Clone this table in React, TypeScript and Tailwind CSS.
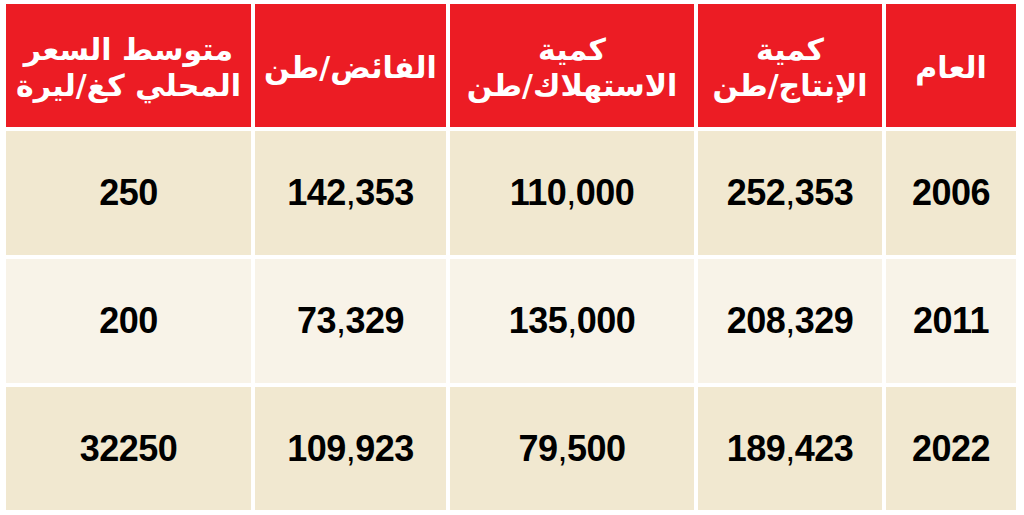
export default function App() {
  const headers = [
    ["العام"],
    ["كمية", "الإنتاج/طن"],
    ["كمية", "الاستهلاك/طن"],
    ["الفائض/طن"],
    ["متوسط السعر", "المحلي كغ/ليرة"],
  ]

  const rows = [
    ["2006", "252,353", "110,000", "142,353", "250"],
    ["2011", "208,329", "135,000", "73,329", "200"],
    ["2022", "189,423", "79,500", "109,923", "32250"],
  ]

  const rowBg = ["bg-[#f1e8d0]", "bg-[#f8f3e8]", "bg-[#f1e8d0]"]

  return (
    <div
      dir="rtl"
      className="w-[1024px] h-[515px] bg-white pt-[4px] pb-[5px] pl-[6px] pr-[8px] grid grid-cols-[130px_184px_244px_191px_245px] grid-rows-[123px_124px_124px_123px] gap-[4px]"
    >
      {headers.map((lines, i) => (
        <div
          key={i}
          className="bg-[#ec1c24] flex flex-col items-center justify-center pt-[4px] text-white font-bold text-[30px] leading-[36px] font-['DejaVu_Sans',sans-serif]"
        >
          {lines.map((l) => (
            <span key={l}>{l}</span>
          ))}
        </div>
      ))}

      {rows.map((row, r) =>
        row.map((cell, c) => {
          const parts = cell.split(",")
          return (
            <div
              key={`${r}-${c}`}
              className={`${rowBg[r]} flex items-center justify-center text-black font-black text-[36px] tracking-[-0.5px] font-['Liberation_Sans',Arial,sans-serif]`}
            >
              <span dir="ltr">
                {parts[0]}
                {parts.length > 1 && <span className="font-normal">,</span>}
                {parts[1]}
              </span>
            </div>
          )
        })
      )}
    </div>
  )
}
